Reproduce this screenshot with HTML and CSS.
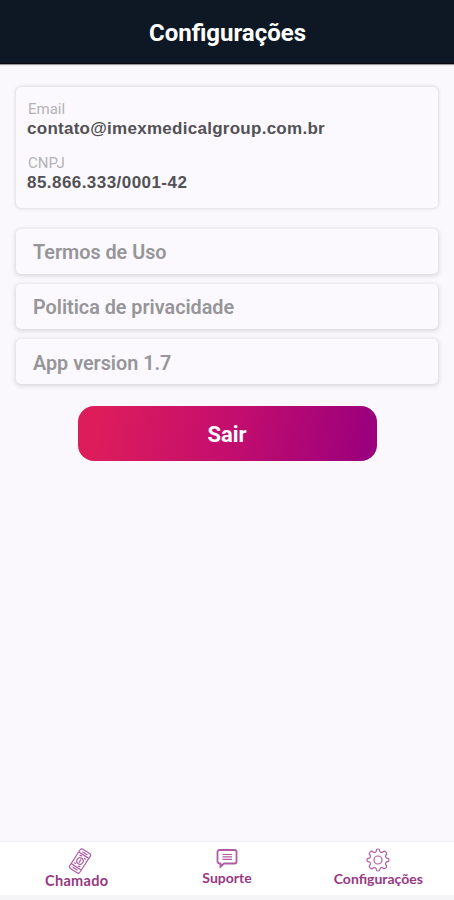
FILE: index.html
```html
<!DOCTYPE html>
<html lang="pt-BR">
  <head>
    <meta charset="utf-8">
    <title>Configurações</title>
    <link rel="stylesheet" href="styles.css">
  </head>

  <body>
    <header class="header">
      <h1>Configurações</h1>
    </header>

    <main class="content">
      <dl class="card account">
        <dt>Email</dt>
        <dd class="email">contato@imexmedicalgroup.com.br</dd>
        <dt>CNPJ</dt>
        <dd class="cnpj">85.866.333/0001-42</dd>
      </dl>

      <div class="card row terms">Termos de Uso</div>
      <div class="card row privacy">Politica de privacidade</div>
      <div class="card row version">App version 1.7</div>

      <button class="logout" type="button">Sair</button>
    </main>

    <nav class="tabs">
      <a class="tab tab-call">
        <svg width="28" height="28" viewBox="0 0 28 28">
          <g transform="rotate(33 14 14)">
            <rect x="8" y="2.500" width="12" height="23" rx="2"/>
            <path d="M8.500 7h11M8.500 21h11M11 5h6M11 23h6"/>
            <circle cx="14" cy="14" r="3.200"/>
            <path d="M14 12v4M10.500 9.500l2.500-1M17.500 18.500l-2.500 1M16 9.500h2M10 18.500h2"/>
          </g>
        </svg>
        <span>Chamado</span>
      </a>
      <a class="tab tab-support">
        <svg width="24" height="22" viewBox="0 0 24 22">
          <path class="bubble" d="M4.500 3h15a2 2 0 0 1 2 2v9.500a2 2 0 0 1-2 2H9l-3.500 3.200v-3.200h-1a2 2 0 0 1-2-2V5a2 2 0 0 1 2-2z"/>
          <path class="lines" d="M7.500 7.500h9.500M7.500 9.900h9.500M7.500 12.300h9.500"/>
        </svg>
        <span>Suporte</span>
      </a>
      <a class="tab tab-settings">
        <svg width="26" height="26" viewBox="0 0 26 26">
          <path d="M10.300 5.200Q11.500 4.800 11.300 3.200Q11.300 2 13 2T14.700 3.200Q14.500 4.800 15.700 5.200T17.600 5.300L18.800 4.300Q19.700 3.800 20.900 5.100T21.700 7.200L20.700 8.400Q20 9.500 20.800 10.300T22.800 11.300Q24 11.300 24 13T22.800 14.700Q21.200 14.500 20.800 15.700T20.700 17.600L21.700 18.800Q22.200 19.700 20.900 20.900T18.800 21.700L17.600 20.700Q16.500 20 15.700 20.800T14.700 22.800Q14.700 24 13 24T11.300 22.800Q11.500 21.200 10.300 20.800T8.400 20.700L7.200 21.700Q6.300 22.200 5.100 20.900T4.300 18.800L5.300 17.600Q6 16.500 5.200 15.700T3.200 14.700Q2 14.700 2 13T3.200 11.300Q4.800 11.500 5.200 10.300T5.300 8.400L4.300 7.200Q3.800 6.300 5.100 5.100T7.200 4.300L8.400 5.300Q9.500 6 10.300 5.200Z"/>
          <circle cx="13" cy="13" r="4"/>
        </svg>
        <span>Configurações</span>
      </a>
    </nav>
  </body>
</html>
```

FILE: styles.css
```css
* {
  box-sizing: border-box;
}

body {
  display: flex;
  flex-direction: column;
  height: 900px;
  margin: 0;
  background: #faf8fc;
  font-family: Roboto, "Liberation Sans", sans-serif;
}

.header {
  height: 64px;
  background: #0e1824;
  border-bottom: 1px solid #05090e;
  box-shadow: 0 1px 1px #999;
  color: white;
  text-align: center;
}

.header h1 {
  margin: 0;
  padding: 1px 0 0 1px;
  font-size: 24px;
  font-weight: 700;
  line-height: 64px;
}

.content {
  flex: 1;
  padding: 23px 16px 0;
}

.card {
  margin: 0;
  border-radius: 5px;
  background: #fbf9fd;
}

.account {
  height: 121px;
  padding: 13px 11px;
  box-shadow: 0 0 3px 1px #dddbe0;
}

.account dt {
  padding-left: 1px;
  color: #b4b2b7;
  font-size: 15px;
  line-height: 19px;
}

.account dd {
  margin: 0 0 15px;
  color: #525155;
  font: bold 17px/20px "Liberation Sans", Arial, sans-serif;
  letter-spacing: 0.27px;
}

.account .cnpj {
  letter-spacing: 0.45px;
}

.row {
  height: 45px;
  margin-bottom: 10px;
  padding-left: 17px;
  box-shadow: 0 1px 4px 1px #d9d7dc;
  color: #969599;
  font-size: 19.8px;
  font-weight: 600;
  line-height: 48px;
}

.terms {
  margin-top: 21px;
}

.version {
  line-height: 49px;
}

.logout {
  display: block;
  width: 299px;
  height: 55px;
  margin: 22px auto 0;
  padding: 2px 0 0;
  border: 0;
  border-radius: 16px;
  background: linear-gradient(100deg, #dc1c5b 8%, #c40e6d 50%, #9c007c 96%);
  color: white;
  font: 700 22px Roboto, sans-serif;
}

.tabs {
  display: grid;
  grid-template-columns: repeat(3, 1fr);
  height: 59px;
  padding-top: 5px;
  border-top: 1px solid #f0eef1;
  border-bottom: 5px solid #f5f4f6;
  background: white;
}

.tab {
  display: flex;
  flex-direction: column;
  align-items: center;
  color: #963883;
  font: 700 14px/18px Lato, sans-serif;
}

.tab svg {
  fill: none;
  stroke: #b05ca4;
  stroke-width: 1.2;
}

.tab .bubble {
  stroke-width: 1.8;
}

.tab-call svg {
  margin-left: 8px;
}

.tab-call span {
  margin-top: -3px;
  padding-left: 2px;
  font-size: 14.5px;
  letter-spacing: 0.3px;
}

.tab-settings span {
  margin-top: -3px;
}
```
